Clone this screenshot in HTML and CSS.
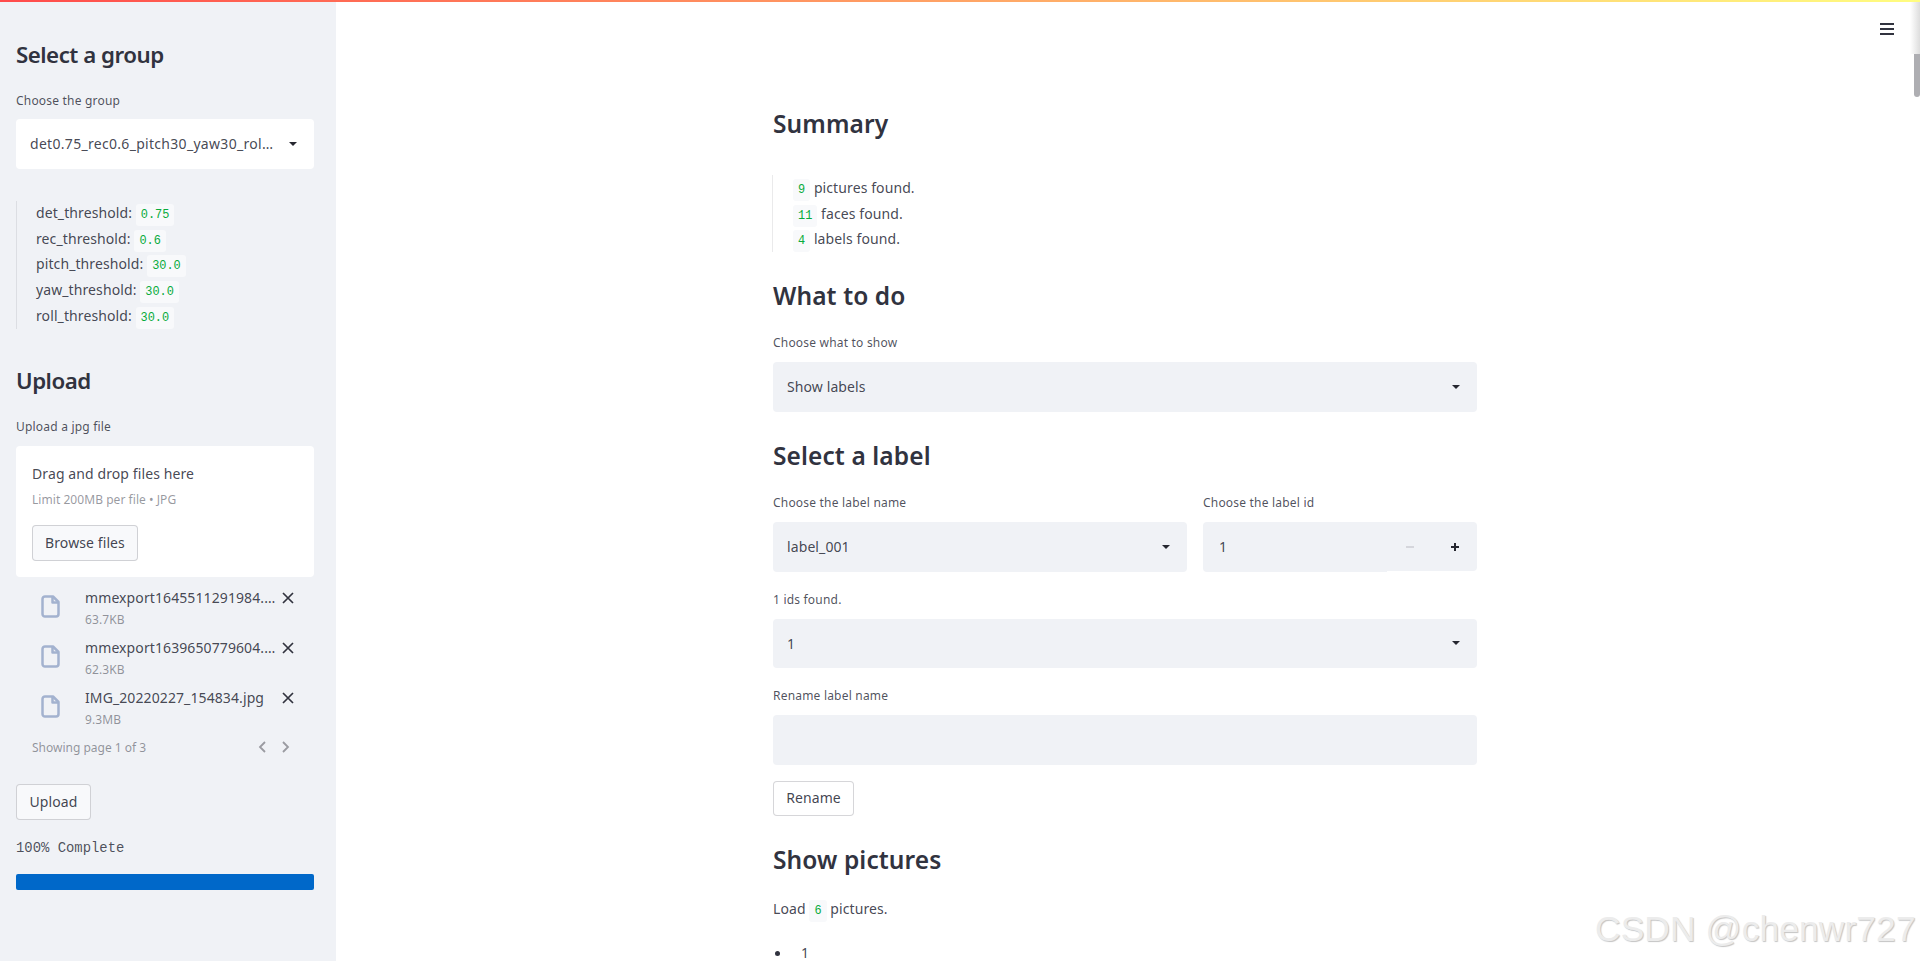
FILE: index.html
```html
<!DOCTYPE html>
<html lang="en">
<head>
<meta charset="utf-8">
<title>Face labels</title>
<link rel="stylesheet" href="styles.css">
</head>
<body>
<div class="topline"></div>
<div class="app">
  <aside class="sidebar">
    <h3 class="sb-h1">Select a group</h3>
    <div class="label sb-l1">Choose the group</div>
    <div class="select white"><span class="ellipsis">det0.75_rec0.6_pitch30_yaw30_rol…</span><svg class="caret" viewBox="0 0 8 4"><path d="M0 0h8L4 4z"/></svg></div>
    <blockquote class="quote sb-quote">
      <p>det_threshold: <code>0.75</code></p>
      <p>rec_threshold: <code>0.6</code></p>
      <p>pitch_threshold: <code>30.0</code></p>
      <p>yaw_threshold: <code>30.0</code></p>
      <p>roll_threshold: <code>30.0</code></p>
    </blockquote>
    <h3 class="sb-h2">Upload</h3>
    <div class="label sb-l2">Upload a jpg file</div>
    <div class="drop">
      <div class="drop-title">Drag and drop files here</div>
      <div class="drop-sub">Limit 200MB per file • JPG</div>
      <button class="btn browse">Browse files</button>
    </div>
    <ul class="files">
      <li class="file">
        <svg class="file-ic" viewBox="0 0 19 23"><path d="M12 1.5H4A2.5 2.5 0 0 0 1.5 4v15A2.5 2.5 0 0 0 4 21.5h11a2.5 2.5 0 0 0 2.5-2.5V7z"/><path d="M11.5 1.5V7.500h6"/></svg>
        <div class="file-meta"><div class="file-name"><span class="ellipsis">mmexport1645511291984.…</span></div><div class="file-size">63.7KB</div></div>
        <svg class="file-x" viewBox="0 0 12 12"><path d="M1 1l10 10M11 1L1 11"/></svg>
      </li>
      <li class="file">
        <svg class="file-ic" viewBox="0 0 19 23"><path d="M12 1.5H4A2.5 2.5 0 0 0 1.5 4v15A2.5 2.5 0 0 0 4 21.5h11a2.5 2.5 0 0 0 2.5-2.5V7z"/><path d="M11.5 1.5V7.500h6"/></svg>
        <div class="file-meta"><div class="file-name"><span class="ellipsis">mmexport1639650779604.…</span></div><div class="file-size">62.3KB</div></div>
        <svg class="file-x" viewBox="0 0 12 12"><path d="M1 1l10 10M11 1L1 11"/></svg>
      </li>
      <li class="file">
        <svg class="file-ic" viewBox="0 0 19 23"><path d="M12 1.5H4A2.5 2.5 0 0 0 1.5 4v15A2.5 2.5 0 0 0 4 21.5h11a2.5 2.5 0 0 0 2.5-2.5V7z"/><path d="M11.5 1.5V7.500h6"/></svg>
        <div class="file-meta"><div class="file-name"><span class="ellipsis">IMG_20220227_154834.jpg</span></div><div class="file-size">9.3MB</div></div>
        <svg class="file-x" viewBox="0 0 12 12"><path d="M1 1l10 10M11 1L1 11"/></svg>
      </li>
    </ul>
    <div class="pager">
      <span>Showing page 1 of 3</span>
      <span class="pager-btns">
        <svg viewBox="0 0 10 14"><path d="M8 2L3 7l5 5"/></svg>
        <svg viewBox="0 0 10 14"><path d="M2 2l5 5-5 5"/></svg>
      </span>
    </div>
    <button class="btn upload">Upload</button>
    <pre class="progress-text">100% Complete</pre>
    <div class="progress"></div>
  </aside>
  <main class="main">
    <div class="content">
      <h3 class="m-h1">Summary</h3>
      <blockquote class="quote m-quote">
        <p><code>9</code> pictures found.</p>
        <p><code>11</code> faces found.</p>
        <p><code>4</code> labels found.</p>
      </blockquote>
      <h3 class="m-h2">What to do</h3>
      <div class="label m-l1">Choose what to show</div>
      <div class="select grey"><span class="ellipsis">Show labels</span><svg class="caret" viewBox="0 0 8 4"><path d="M0 0h8L4 4z"/></svg></div>
      <h3 class="m-h3">Select a label</h3>
      <div class="two-col">
        <div class="col-name">
          <div class="label">Choose the label name</div>
          <div class="select grey"><span class="ellipsis">label_001</span><svg class="caret" viewBox="0 0 8 4"><path d="M0 0h8L4 4z"/></svg></div>
        </div>
        <div class="col-id">
          <div class="label">Choose the label id</div>
          <div class="number">
            <div class="number-field">1</div>
            <div class="number-steps">
              <svg class="step minus" viewBox="0 0 8 2"><path d="M0 0h8v2H0z"/></svg>
              <svg class="step plus" viewBox="0 0 8 8"><path d="M3 0h2v3h3v2H5v3H3V5H0V3h3z"/></svg>
            </div>
          </div>
        </div>
      </div>
      <div class="label m-l2">1 ids found.</div>
      <div class="select grey short"><span class="ellipsis">1</span><svg class="caret" viewBox="0 0 8 4"><path d="M0 0h8L4 4z"/></svg></div>
      <div class="label m-l3">Rename label name</div>
      <div class="input"></div>
      <button class="btn rename">Rename</button>
      <h3 class="m-h4">Show pictures</h3>
      <p class="load">Load <code>6</code> pictures.</p>
      <ul class="ids"><li>1</li></ul>
    </div>
  </main>
</div>
<div class="hamburger"><span></span><span></span><span></span></div>
<div class="scrollbar"><div class="scroll-fade"></div><div class="scroll-thumb"></div></div>
<div class="watermark">CSDN @chenwr727</div>
</body>
</html>
```

FILE: styles.css
```css
* { box-sizing: border-box; }
html, body { margin: 0; height: 100%; overflow: hidden; background: #fff; }
body { font-family: "Noto Sans", sans-serif; font-size: 14px; letter-spacing: .1px; color: rgba(49, 51, 63, .9); position: relative; }
h3 { margin: 0; font-size: 24.500px; line-height: 30px; font-weight: 600; color: #31333f; }
p { margin: 0; }
ul { margin: 0; padding: 0; list-style: none; }
.topline { position: absolute; top: 0; left: 0; right: 0; height: 2px; background: linear-gradient(90deg, #ff4b4b, #fffd80); z-index: 2; }
.app { display: flex; height: 100%; }

.sidebar { width: 336px; flex: none; height: 100%; background: #f0f2f6; padding: 40px 22px 0 16px; }
.sidebar h3 { font-size: 22.300px; letter-spacing: -.5px; }
.sb-h1 { margin-bottom: 23px; }
.label { font-size: 12px; letter-spacing: .2px; line-height: 16px; color: rgba(49, 51, 63, .85); }
.sb-l1 { margin-bottom: 10px; }
.select { height: 50px; border-radius: 4px; display: flex; align-items: center; justify-content: space-between; padding: 0 17px 1px 14px; font-size: 14px; }
.select.white { background: #fff; letter-spacing: .3px; }
.select.grey { background: #f0f2f6; }
.select.short { height: 49px; }
.ellipsis { overflow: hidden; white-space: nowrap; text-overflow: ellipsis; min-width: 0; }
.caret { width: 8px; height: 4px; flex: none; margin-left: 10px; fill: #262730; }

.quote { margin: 0; border-left: 1px solid rgba(49, 51, 63, .1); }
.quote p { height: 25.700px; line-height: 25.700px; white-space: nowrap; }
code { font-family: "Liberation Mono", monospace; font-size: 11.900px; line-height: 1; letter-spacing: 0; color: #09ab3b; background: #f8f9fb; border-radius: 3px; padding: 4px 5px; }
.sb-quote { margin-top: 32px; height: 128px; padding: 0 0 0 19px; }
.sb-quote p { position: relative; top: -1px; }
.sb-h2 { margin-top: 37px; margin-bottom: 23px; }
.sb-l2 { margin-bottom: 11px; }
.drop { height: 131px; background: #fff; border-radius: 4px; padding: 19px 16px 0; }
.drop-title { line-height: 18px; }
.drop-sub { font-size: 12px; letter-spacing: .05px; line-height: 16px; margin-top: 9px; color: rgba(49, 51, 63, .5); }
.btn { display: block; font: inherit; font-size: 14px; letter-spacing: .1px; color: rgba(49, 51, 63, .92); background: #fff; border: 1px solid rgba(49, 51, 63, .2); border-radius: 4px; padding: 0 0 2px; height: 36px; }
.browse { width: 106px; margin-top: 17px; background: #f8f9fb; }
.files { padding: 10px 0 0 25px; }
.file { display: flex; height: 50px; align-items: flex-start; }
.file-ic { width: 19px; height: 23px; margin-top: 8px; flex: none; fill: none; stroke: #a3b2cf; stroke-width: 2.5; stroke-linejoin: round; }
.file-meta { width: 192px; margin-left: 25px; flex: none; }
.file-name { display: flex; line-height: 22px; }
.file-size { font-size: 12px; line-height: 17px; margin-top: 2px; color: rgba(49, 51, 63, .5); }
.file-x { width: 12px; height: 12px; flex: none; margin: 5px 0 0 5px; fill: none; stroke: #31333f; stroke-width: 1.7; }
.pager { display: flex; justify-content: space-between; align-items: center; height: 22px; padding: 0 23px 0 16px; font-size: 12px; letter-spacing: 0; color: rgba(49, 51, 63, .5); margin-top: -1px; }
.pager-btns { display: flex; gap: 14px; }
.pager-btns svg { width: 10px; height: 14px; fill: none; stroke: #9a9ba1; stroke-width: 1.8; }
.upload { width: 75px; margin-top: 26px; background: #f8f9fb; }
.progress-text { font-family: "Liberation Mono", monospace; font-size: 13.900px; font-weight: 400; letter-spacing: 0; line-height: 18px; margin: 19px 0 0; color: rgba(49, 51, 63, .85); }
.progress { height: 16px; margin-top: 17px; background: #0068c9; border-radius: 2px; }

.main { flex: 1; min-width: 0; padding-right: 6px; display: flex; justify-content: center; }
.content { width: 704px; padding-top: 109px; }
.m-quote { margin-top: 36px; height: 77px; padding: 0 0 0 20px; margin-left: -1px; }
.m-h2 { margin-top: 29px; }
.m-l1 { margin-top: 24px; margin-bottom: 11px; }
.m-h3 { margin-top: 29px; margin-bottom: 24px; }
.two-col { display: flex; gap: 16px; }
.col-name { width: 414px; flex: none; }
.col-id { flex: 1; min-width: 0; }
.col-name .label, .col-id .label { margin-bottom: 11px; }
.number { display: flex; align-items: flex-start; }
.number-field { width: 184px; flex: none; height: 50px; background: #f0f2f6; border-radius: 4px 0 0 4px; padding: 0 16px; line-height: 49px; }
.number-steps { flex: 1; height: 49px; background: #f0f2f6; border-radius: 0 4px 4px 0; display: flex; align-items: center; }
.step { flex: none; }
.minus { width: 8px; height: 2px; fill: #d5d6dc; margin-left: 19px; }
.plus { width: 8px; height: 8px; fill: #262730; margin-left: 37px; }
.m-l2 { margin-top: 20px; margin-bottom: 11px; }
.m-l3 { margin-top: 20px; margin-bottom: 11px; }
.input { height: 50px; background: #f0f2f6; border-radius: 4px; }
.rename { width: 81px; height: 35px; margin-top: 16px; }
.m-h4 { margin-top: 29px; }
.load { margin-top: 24px; line-height: 20px; }
.ids { margin-top: 24px; line-height: 20px; }
.ids li { display: flex; align-items: center; }
.ids li::before { content: ""; width: 5px; height: 5px; border-radius: 50%; background: #31333f; margin: 0 21px 0 2px; }

.hamburger { position: absolute; top: 23px; left: 1880px; width: 14px; display: flex; flex-direction: column; gap: 3px; }
.hamburger span { display: block; height: 2px; background: #31333f; }
.scrollbar { position: absolute; top: 2px; right: 0; width: 6px; height: 95px; }
.scroll-fade { position: absolute; top: 0; right: 0; width: 10px; height: 52px; background: linear-gradient(90deg, rgba(235, 235, 235, 0), #ddd); }
.scroll-thumb { position: absolute; top: 52px; right: 0; width: 6px; height: 43px; background: #aeaeb2; border-radius: 0 0 3px 3px; }
.watermark { position: absolute; left: 1595px; top: 907px; font-family: "Liberation Sans", sans-serif; font-size: 35.400px; line-height: 44px; white-space: nowrap; color: #ececec; text-shadow: 1px 1px 1px #c4c4c4; }
```
